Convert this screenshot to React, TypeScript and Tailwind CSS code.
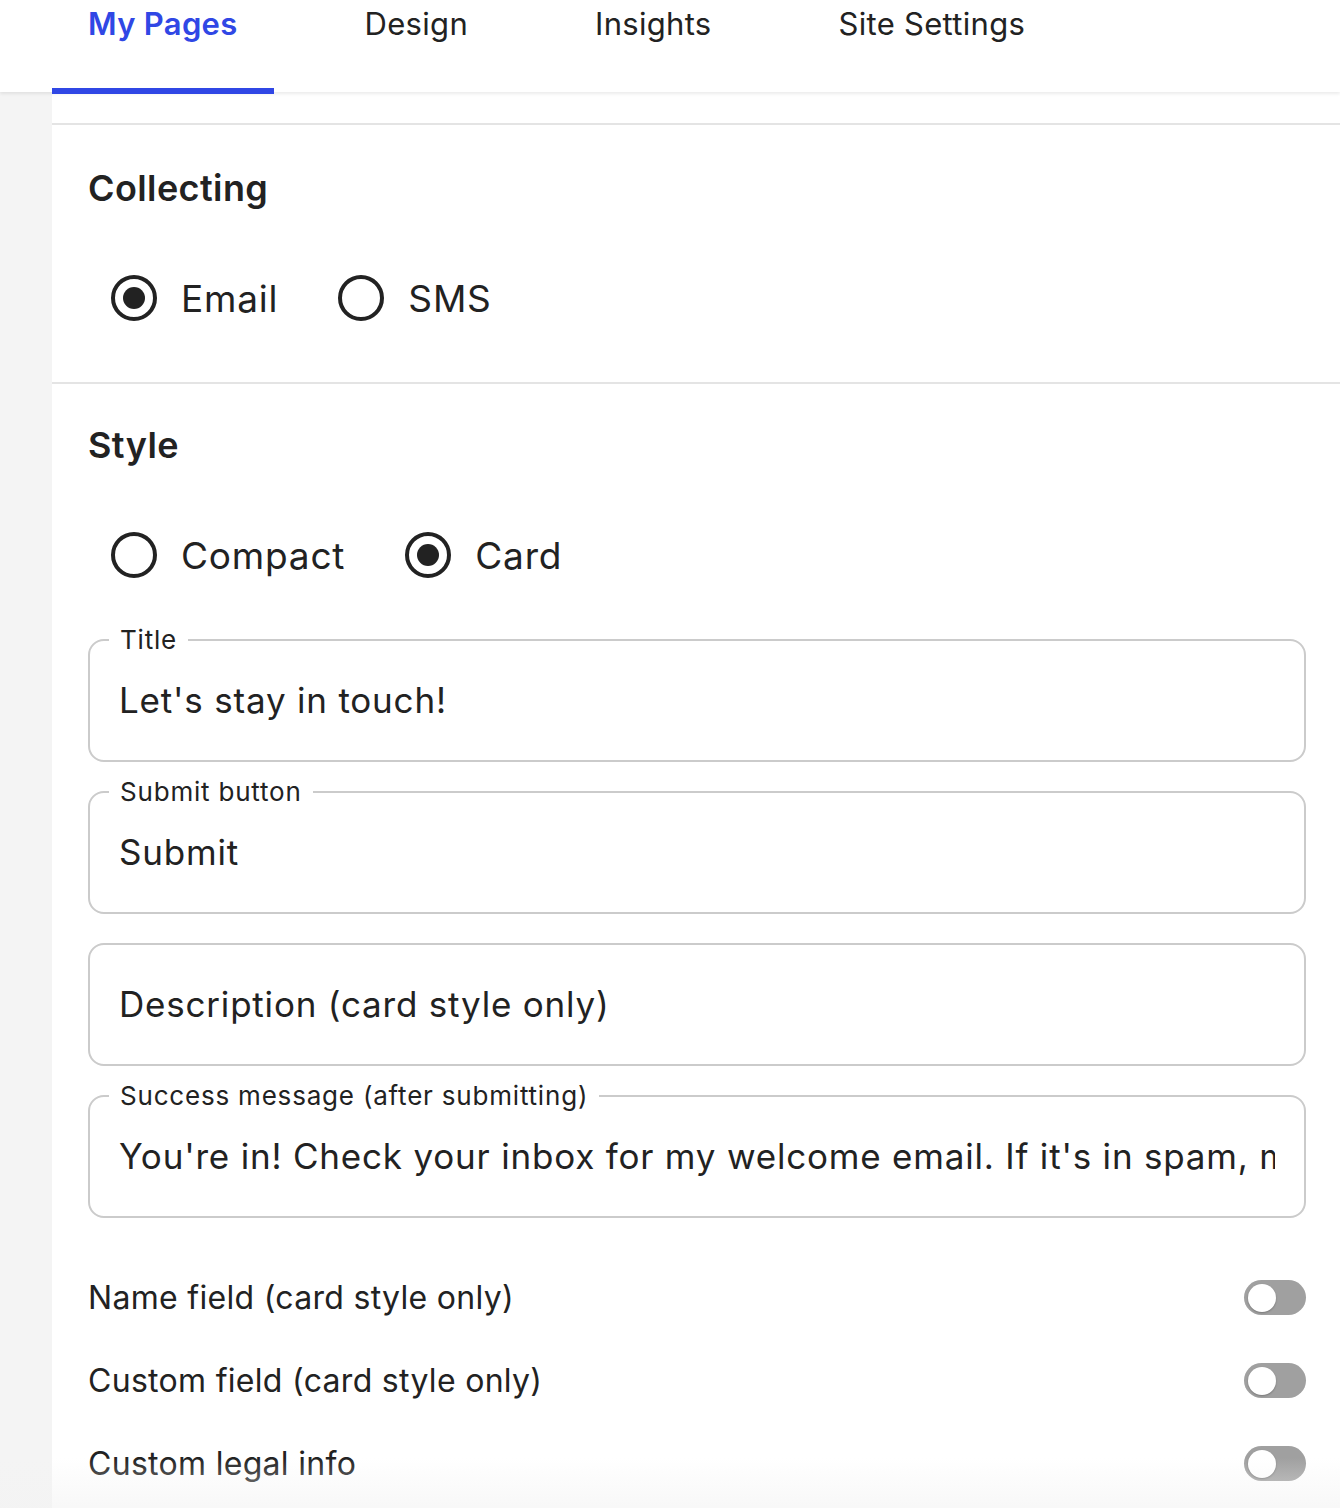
import React, { useState } from 'react'

const font = { fontFamily: 'Inter, "Noto Sans", sans-serif' }

function Radio({ checked, label, onClick }: { checked: boolean; label: string; onClick: () => void }) {
  return (
    <button onClick={onClick} className="flex items-center gap-[24px]">
      <span className="w-[46px] h-[46px] rounded-full border-[4px] border-[#222] flex items-center justify-center">
        {checked && <span className="w-[22px] h-[22px] rounded-full bg-[#222]" />}
      </span>
      <span className="text-[37px] tracking-[0.8px] text-[#222] leading-none">{label}</span>
    </button>
  )
}

function Field({ label, value }: { label?: string; value: string }) {
  return (
    <div className="relative h-[123px] border-2 border-[#cbcbcb] rounded-[16px] flex items-center pl-[29px] pr-[29px]">
      {label && (
        <span className="absolute left-[19px] -top-[18px] bg-white px-[11px] text-[26px] leading-[34px] tracking-[0.8px] text-[#222] whitespace-nowrap">
          {label}
        </span>
      )}
      <span className="block text-[35px] tracking-[0.8px] text-[#222] whitespace-nowrap overflow-hidden">{value}</span>
    </div>
  )
}

function Toggle({ on, onClick }: { on: boolean; onClick: () => void }) {
  return (
    <button
      onClick={onClick}
      className={`w-[62px] h-[35px] rounded-full flex items-center px-[4px] ${on ? 'bg-[#3047e5] justify-end' : 'bg-[#a0a0a0] justify-start'}`}
    >
      <span className="w-[28px] h-[28px] rounded-full bg-white shadow-[0_1px_2px_rgba(0,0,0,0.25)]" />
    </button>
  )
}

export default function App() {
  const [tab, setTab] = useState('My Pages')
  const [collect, setCollect] = useState<'email' | 'sms'>('email')
  const [style, setStyle] = useState<'compact' | 'card'>('card')
  const [toggles, setToggles] = useState([false, false, false])

  const tabs = ['My Pages', 'Design', 'Insights', 'Site Settings']
  const rows = ['Name field (card style only)', 'Custom field (card style only)', 'Custom legal info']

  return (
    <div className="relative h-[1508px] w-full overflow-hidden bg-[#f4f4f4] flex flex-col" style={font}>
      {/* Tabs */}
      <div className="h-[92px] bg-white flex-shrink-0 shadow-[0_2px_3px_rgba(0,0,0,0.08)] relative z-10">
        <nav className="flex gap-[55px] pl-[52px] h-full">
          {tabs.map((t) => (
            <button
              key={t}
              onClick={() => setTab(t)}
              className={`relative px-[36px] h-full flex items-start pt-[4px] text-[31px] leading-[40px] tracking-[0.3px] ${
                tab === t ? 'text-[#3047e5] font-semibold' : 'text-[#222]'
              }`}
            >
              {t}
              {tab === t && <span className="absolute left-0 right-0 bottom-[-2px] h-[6px] bg-[#3047e5]" />}
            </button>
          ))}
        </nav>
      </div>

      {/* Panel */}
      <div className="flex-1 ml-[52px] bg-white">
        <div className="h-[33px] border-b-2 border-[#e4e4e4]" />

        {/* Collecting */}
        <div className="pl-[36px] pr-[34px] pt-[41px] pb-[61px] border-b-2 border-[#e4e4e4]">
          <h2 className="text-[36px] leading-[44px] font-semibold tracking-[0.4px] text-[#222]">Collecting</h2>
          <div className="flex gap-[60px] mt-[65px] pl-[23px]">
            <Radio checked={collect === 'email'} label="Email" onClick={() => setCollect('email')} />
            <Radio checked={collect === 'sms'} label="SMS" onClick={() => setCollect('sms')} />
          </div>
        </div>

        {/* Style */}
        <div className="pl-[36px] pr-[34px] pt-[39px]">
          <h2 className="text-[36px] leading-[44px] font-semibold tracking-[0.4px] text-[#222]">Style</h2>
          <div className="flex gap-[60px] mt-[65px] pl-[23px]">
            <Radio checked={style === 'compact'} label="Compact" onClick={() => setStyle('compact')} />
            <Radio checked={style === 'card'} label="Card" onClick={() => setStyle('card')} />
          </div>

          <div className="flex flex-col gap-[29px] mt-[61px]">
            <Field label="Title" value="Let's stay in touch!" />
            <Field label="Submit button" value="Submit" />
            <Field value="Description (card style only)" />
            <Field
              label="Success message (after submitting)"
              value="You're in! Check your inbox for my welcome email. If it's in spam, move it to your primary inbox."
            />
          </div>

          <div className="mt-[38px] flex flex-col">
            {rows.map((r, i) => (
              <div key={r} className="h-[83px] flex items-center justify-between">
                <span className="text-[32px] tracking-[0.3px] text-[#222]">{r}</span>
                <Toggle
                  on={toggles[i]}
                  onClick={() => setToggles(toggles.map((v, j) => (j === i ? !v : v)))}
                />
              </div>
            ))}
          </div>
        </div>
      </div>

      <div className="pointer-events-none absolute left-0 right-0 bottom-0 h-[50px] bg-linear-to-b from-transparent to-[#f3f3f3]/60" />
    </div>
  )
}
